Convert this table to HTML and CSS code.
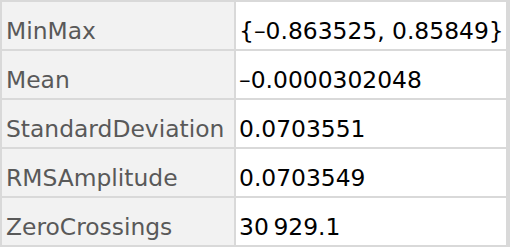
FILE: index.html
```html
<!DOCTYPE html>
<html>
<head>
<meta charset="utf-8">
<link rel="stylesheet" href="styles.css">
</head>
<body>
<div class="grid">
  <div class="key">MinMax</div><div class="val">{–0.863525, 0.85849}</div>
  <div class="key">Mean</div><div class="val">–0.0000302048</div>
  <div class="key">StandardDeviation</div><div class="val">0.0703551</div>
  <div class="key">RMSAmplitude</div><div class="val">0.0703549</div>
  <div class="key">ZeroCrossings</div><div class="val">30&#8201;929.1</div>
</div>
</body>
</html>
```
FILE: styles.css
```css
html, body { margin: 0; padding: 0; background: #fff; }
.grid {
  display: grid;
  grid-template-columns: 232px 270px;
  grid-auto-rows: 47px;
  gap: 2px;
  padding: 2px;
  width: 506px;
  background: #d9d9d9;
  font-family: "DejaVu Sans", Verdana, sans-serif;
  font-size: 23.4px;
}
.key, .val {
  display: flex;
  align-items: center;
  padding-top: 10px;
  box-sizing: border-box;
}
.key { background: #f2f2f2; color: #595959; padding-left: 4px; }
.val { background: #fff; color: #000; padding-left: 3px; }
```
